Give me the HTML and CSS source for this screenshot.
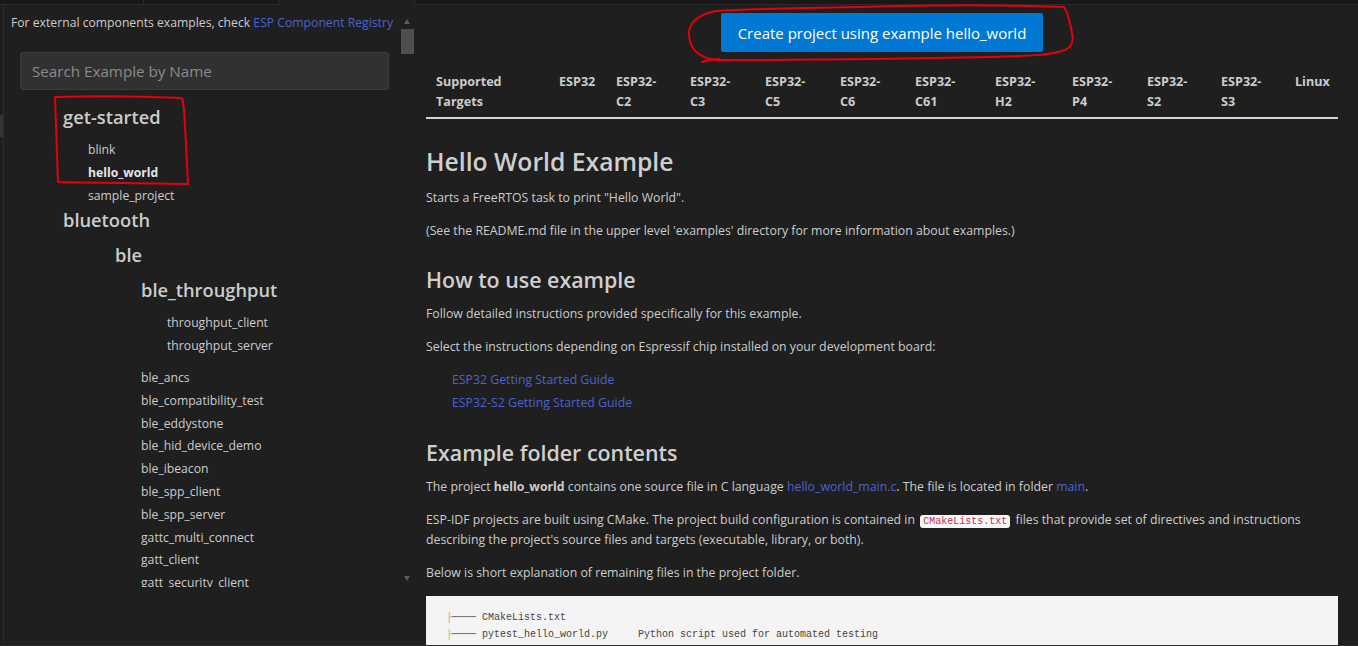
FILE: index.html
```html
<!DOCTYPE html>
<html lang="en">
<head>
<meta charset="utf-8">
<title>ESP-IDF Examples</title>
<link rel="stylesheet" href="styles.css">
</head>
<body>
<div class="window">
  <div class="topbar">
    <div class="tab tab-a"></div>
    <div class="tab tab-b"></div>
    <div class="tab-gap"></div>
    <div class="tab tab-fill"></div>
  </div>
  <div class="workspace">
    <div class="gutter"><div class="gutter-mark"></div></div>
    <aside class="sidebar">
      <div class="sidebar-scroll">
        <div class="sidebar-content">
          <p class="note">For external components examples, check <a class="link">ESP Component Registry</a></p>
          <input class="search" type="text" placeholder="Search Example by Name">
          <div class="tree">
            <div class="tree-title in0">get-started</div>
            <ul class="tree-list in1">
              <li>blink</li>
              <li class="active">hello_world</li>
              <li>sample_project</li>
            </ul>
            <div class="tree-title in0">bluetooth</div>
            <div class="tree-title in2">ble</div>
            <div class="tree-title in3">ble_throughput</div>
            <ul class="tree-list in4 spaced">
              <li>throughput_client</li>
              <li>throughput_server</li>
            </ul>
            <ul class="tree-list in3">
              <li>ble_ancs</li>
              <li>ble_compatibility_test</li>
              <li>ble_eddystone</li>
              <li>ble_hid_device_demo</li>
              <li>ble_ibeacon</li>
              <li>ble_spp_client</li>
              <li>ble_spp_server</li>
              <li>gattc_multi_connect</li>
              <li>gatt_client</li>
              <li>gatt_security_client</li>
            </ul>
          </div>
        </div>
        <div class="scrollbar">
          <div class="arrow arrow-up"></div>
          <div class="thumb"></div>
          <div class="track"></div>
          <div class="arrow arrow-down"></div>
        </div>
      </div>
    </aside>
    <main class="main">
      <div class="actions">
        <button class="btn">Create project using example hello_world</button>
      </div>
      <div class="targets">
        <div>Supported Targets</div>
        <div>ESP32</div>
        <div>ESP32-C2</div>
        <div>ESP32-C3</div>
        <div>ESP32-C5</div>
        <div>ESP32-C6</div>
        <div>ESP32-C61</div>
        <div>ESP32-H2</div>
        <div>ESP32-P4</div>
        <div>ESP32-S2</div>
        <div>ESP32-S3</div>
        <div>Linux</div>
      </div>
      <article class="doc">
        <h1 class="doc-h1">Hello World Example</h1>
        <p>Starts a FreeRTOS task to print "Hello World".</p>
        <p>(See the README.md file in the upper level 'examples' directory for more information about examples.)</p>
        <h2 class="doc-h2">How to use example</h2>
        <p>Follow detailed instructions provided specifically for this example.</p>
        <p>Select the instructions depending on Espressif chip installed on your development board:</p>
        <ul class="guides">
          <li><a class="link">ESP32 Getting Started Guide</a></li>
          <li><a class="link">ESP32-S2 Getting Started Guide</a></li>
        </ul>
        <h2 class="doc-h2">Example folder contents</h2>
        <p>The project <strong>hello_world</strong> contains one source file in C language <a class="link">hello_world_main.c</a>. The file is located in folder <a class="link">main</a>.</p>
        <p>ESP-IDF projects are built using CMake. The project build configuration is contained in <code class="inline-code">CMakeLists.txt</code> files that provide set of directives and instructions describing the project's source files and targets (executable, library, or both).</p>
        <p>Below is short explanation of remaining files in the project folder.</p>
        <pre class="code-block"><span class="tree-mark">├</span>──── CMakeLists.txt
<span class="tree-mark">├</span>──── pytest_hello_world.py     Python script used for automated testing</pre>
      </article>
    </main>
  </div>
  <svg class="annotations" width="1358" height="646" viewBox="0 0 1358 646">
    <path d="M56 97 C 90 96, 140 96, 181 98 C 183 99, 183 101, 184 110 C 186 140, 187 165, 188 184 C 150 183, 100 183, 58 182 C 57 160, 56 130, 55 97" />
    <path d="M716 11 C 700 14, 688 22, 689 35 C 690 50, 700 58, 716 60 C 780 60, 900 59, 990 57 C 1030 56, 1050 55, 1062 51 C 1072 48, 1074 42, 1072 33 C 1070 22, 1068 13, 1064 7 C 1010 5, 930 5, 860 7 C 800 8, 750 9, 716 11" />
    <path d="M702 62 C 708 60, 714 59, 720 59" />
  </svg>
</div>
</body>
</html>
```

FILE: styles.css
```css
* { box-sizing: border-box; }

html, body {
  margin: 0;
  padding: 0;
}

body {
  width: 1358px;
  height: 646px;
  overflow: hidden;
  background: #1f1f1f;
  color: #cccccc;
  font-family: "Open Sans", "Noto Sans", sans-serif;
}

.window {
  position: relative;
  width: 1358px;
  height: 646px;
  display: flex;
  flex-direction: column;
  border-bottom: 1px solid #2b2b2b;
}

/* top strip */
.topbar {
  display: flex;
  height: 5px;
  flex: none;
}
.tab {
  background: #181818;
  border-right: 1px solid #2b2b2b;
  border-bottom: 1px solid #2b2b2b;
}
.tab-a { width: 144px; }
.tab-b { width: 135px; }
.tab-gap { width: 135px; }
.tab-fill {
  flex: 1;
  border-left: 1px solid #2b2b2b;
  border-right: none;
}

.workspace {
  flex: 1;
  display: flex;
  min-height: 0;
}

.gutter {
  width: 3px;
  flex: none;
  padding-top: 110px;
}
.gutter-mark {
  height: 22px;
  background: #353535;
}

/* sidebar */
.sidebar {
  width: 412px;
  flex: none;
  border-left: 1px solid #2b2b2b;
}
.sidebar-scroll {
  display: flex;
  margin-top: 8px;
  height: 574px;
  overflow: hidden;
}
.sidebar-content {
  width: 396px;
  flex: none;
  padding-left: 7px;
  font-size: 12.2px;
}
.note {
  margin: 0;
  line-height: 20px;
  white-space: nowrap;
}
.link {
  color: #4a62d1;
  text-decoration: none;
}
.search {
  display: block;
  margin: 19px 0 0 9px;
  width: 369px;
  height: 38px;
  padding: 0 0 0 11px;
  background: #313131;
  border: 1px solid #3c3c3c;
  border-radius: 3px;
  color: #cccccc;
  font-family: inherit;
  font-size: 15.2px;
  outline: none;
}
.search::placeholder { color: #8b8b8b; }

.tree { margin-top: 14px; }
.tree-title {
  margin: 0 0 9px;
  font-size: 18.3px;
  font-weight: 600;
  line-height: 26px;
  white-space: nowrap;
  color: #cccccc;
}
.tree-list {
  list-style: none;
  margin: 0;
  padding-right: 0;
  line-height: 22.8px;
  white-space: nowrap;
}
.tree-list.spaced { margin-bottom: 9px; }
.tree-list .active {
  font-weight: 700;
  color: #e6e6e6;
}
.in0 { padding-left: 52px; }
.in1 { padding-left: 77px; }
.in2 { padding-left: 104px; }
.in3 { padding-left: 130px; }
.in4 { padding-left: 156px; }

/* fake scrollbar */
.scrollbar {
  width: 14px;
  flex: none;
  display: flex;
  flex-direction: column;
  align-items: center;
  padding: 6px 0 6px;
}
.arrow {
  width: 0;
  height: 0;
  border-left: 3.5px solid transparent;
  border-right: 3.5px solid transparent;
}
.arrow-up { border-bottom: 5px solid #5a5a5a; }
.arrow-down { border-top: 5px solid #5a5a5a; }
.thumb {
  align-self: flex-end;
  width: 13px;
  height: 25px;
  margin-top: 5px;
  background: #4f4f4f;
}
.track { flex: 1; }

/* main */
.main {
  flex: 1;
  min-width: 0;
  padding: 0 20px 0 11px;
  overflow: hidden;
  font-size: 12.3px;
}
.actions {
  display: flex;
  justify-content: center;
  padding-top: 8px;
}
.btn {
  height: 39px;
  padding: 0 17px;
  background: #0078d4;
  color: #ffffff;
  border: none;
  border-radius: 2px;
  font-family: "Open Sans", sans-serif;
  font-size: 15px;
}

.targets {
  display: grid;
  grid-template-columns: 123px 57px 74px 75px 75px 75px 80px 77px 75px 74px 74px 53px;
  margin-top: 14px;
  border-bottom: 2px solid #d4d4d4;
  font-weight: 700;
  font-size: 12.6px;
  line-height: 20px;
}
.targets > div { padding: 6px 14px 5px 10px; }

.doc-h1 {
  margin: 27px 0 10px;
  font-size: 24.7px;
  font-weight: 600;
  line-height: 32px;
  color: #cfcfcf;
}
.doc-h2 {
  margin: 23px 0 8px;
  font-size: 21.4px;
  font-weight: 600;
  line-height: 32px;
  color: #cfcfcf;
}
.doc p {
  margin: 0 0 13px;
  line-height: 20px;
}
.doc strong { font-weight: 700; }
.guides {
  list-style: none;
  margin: -2px 0 0;
  padding-left: 26px;
  line-height: 23px;
}
.inline-code {
  margin: 0 2px;
  padding: 1px 3px;
  background: #f7f7f7;
  color: #c9304f;
  border-radius: 3px;
  font-family: "Liberation Mono", "DejaVu Sans Mono", monospace;
  font-size: 10px;
  line-height: 14px;
}
.code-block {
  margin: 12px 0 0;
  padding: 13px 20px;
  background: #f4f4f4;
  color: #444444;
  font-family: "Liberation Mono", "DejaVu Sans Mono", monospace;
  font-size: 10px;
  line-height: 17px;
  white-space: pre;
}
.tree-mark { color: #c9a07a; }

/* hand-drawn red annotations */
.annotations {
  position: absolute;
  left: 0;
  top: 0;
  pointer-events: none;
  fill: none;
  stroke: #e3000f;
  stroke-width: 2;
  stroke-linecap: round;
  stroke-linejoin: round;
}
```
